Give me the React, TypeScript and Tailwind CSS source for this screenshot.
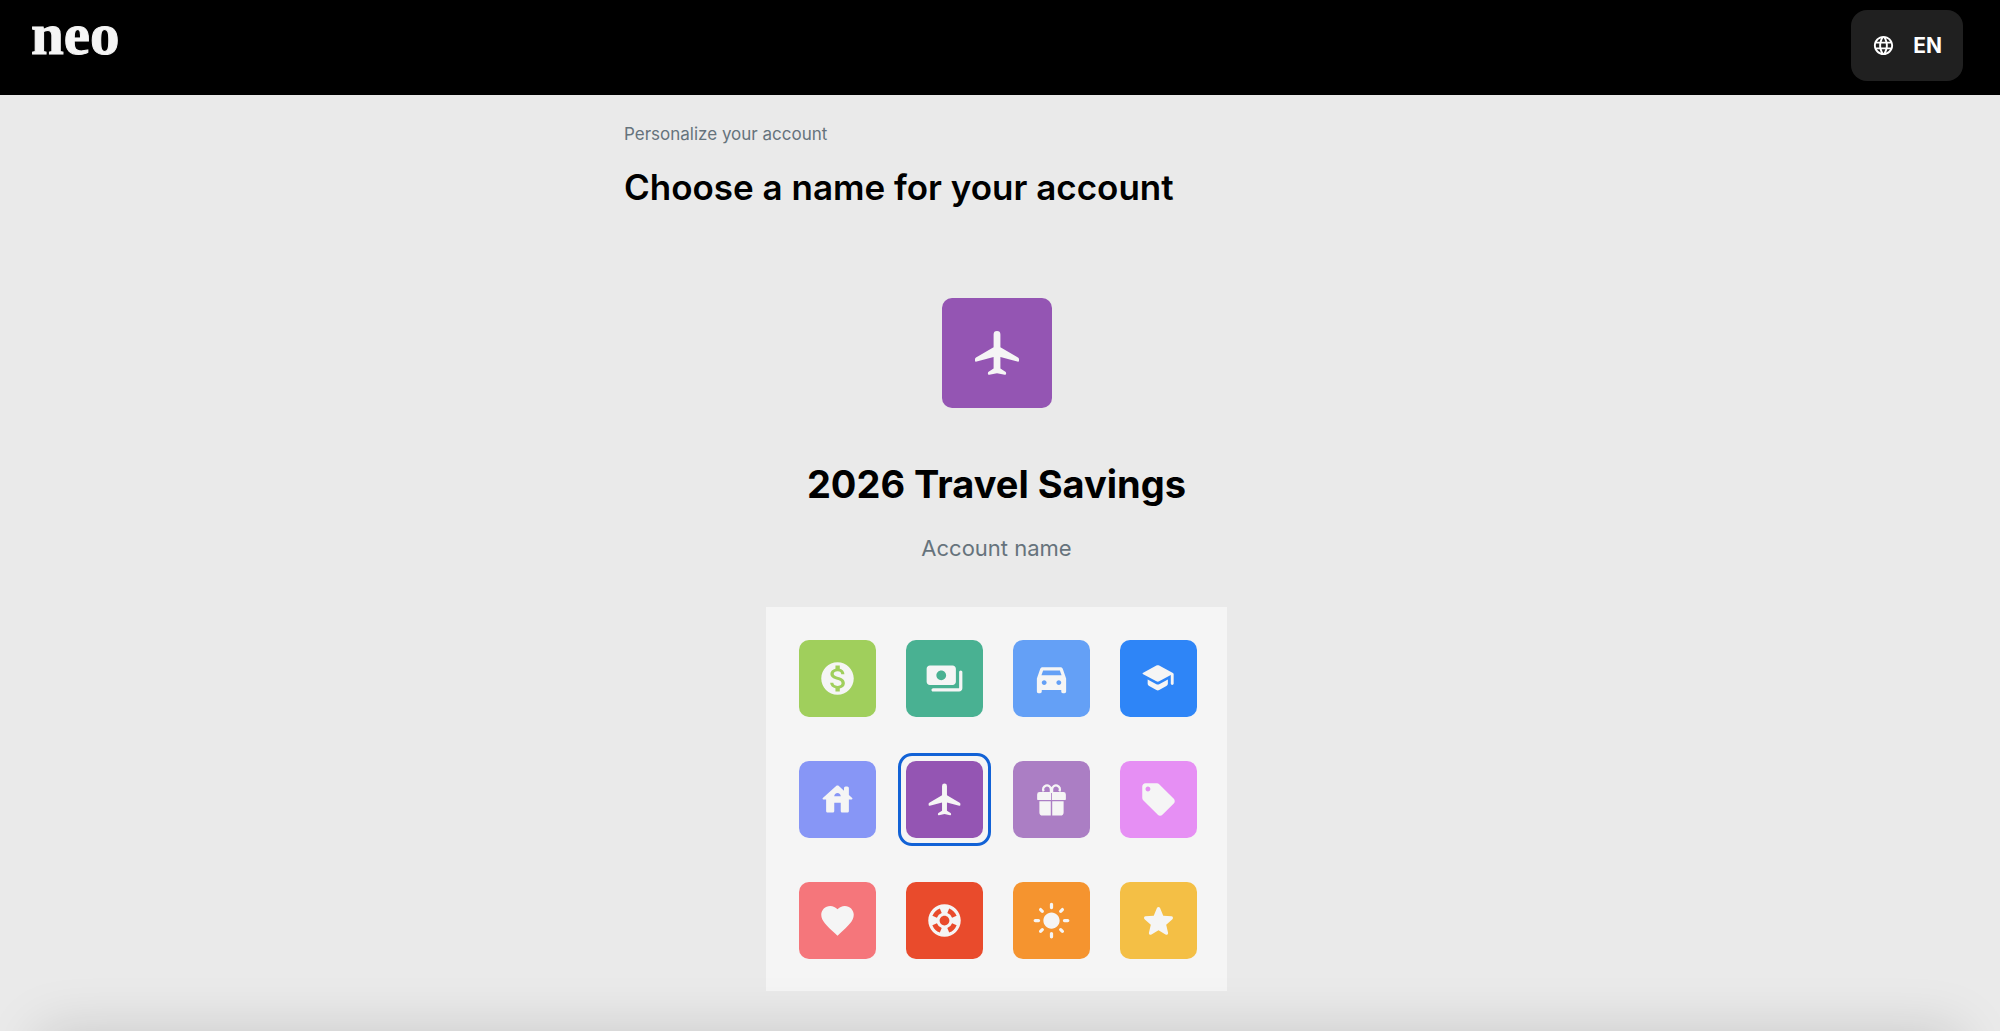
import clsx from "clsx";
import { useState } from "react";
import type { ComponentType } from "react";
import {
  MdDirectionsCarFilled,
  MdFavorite,
  MdLanguage,
  MdLightMode,
  MdLocalOffer,
  MdMonetizationOn,
  MdSupport,
} from "react-icons/md";

type IconProps = { className?: string };

type AccountIcon = {
  id: string;
  label: string;
  color: string;
  Icon: ComponentType<IconProps>;
};

function PaymentsIcon({ className }: IconProps) {
  return (
    <svg viewBox="0 0 24 24" fill="currentColor" className={className}>
      <path d="M19 14V6c0-1.1-.9-2-2-2H3c-1.1 0-2 .9-2 2v8c0 1.1.9 2 2 2h14c1.1 0 2-.9 2-2zm-9-1c-1.66 0-3-1.34-3-3s1.34-3 3-3 3 1.34 3 3-1.34 3-3 3zm13-5v10c0 1.1-.9 2-2 2H5c-.55 0-1-.45-1-1s.45-1 1-1h16V8c0-.55.45-1 1-1s1 .45 1 1z" />
    </svg>
  );
}

function SchoolIcon({ className }: IconProps) {
  return (
    <svg viewBox="-1 -1 27 27" fill="currentColor" className={className}>
      <path d="M5 13.18v2.81c0 .73.4 1.41 1.04 1.76l5 2.73c.6.33 1.32.33 1.92 0l5-2.73c.64-.35 1.04-1.03 1.04-1.76v-2.81l-6.04 3.3c-.6.33-1.32.33-1.92 0L5 13.18zm6.04-9.66L1.9 8.5c-.6.35-.6.65 0 1l9.14 4.98c.6.33 1.32.33 1.92 0L21 10.09V16c0 .55.45 1 1 1s1-.45 1-1V9.59c0-.37-.2-.7-.52-.88l-9.52-5.19c-.6-.32-1.32-.32-1.92 0z" />
    </svg>
  );
}

function HouseIcon({ className }: IconProps) {
  return (
    <svg viewBox="0 0 24 24" fill="currentColor" className={className}>
      <path d="M19 9.3V5c0-.55-.45-1-1-1h-1c-.55 0-1 .45-1 1v1.6l-3.33-3c-.38-.34-.96-.34-1.34 0l-8.36 7.53c-.34.3-.13.87.33.87H5v7c0 .55.45 1 1 1h3c.55 0 1-.45 1-1v-5h4v5c0 .55.45 1 1 1h3c.55 0 1-.45 1-1v-7h1.7c.46 0 .68-.57.33-.87L19 9.3zm-9 .7c0-1.1.9-2 2-2s2 .9 2 2h-4z" />
    </svg>
  );
}

function PlaneIcon({ className }: IconProps) {
  return (
    <svg viewBox="-5 -5 54 54" fill="currentColor" className={className}>
      <path d="M22 0a3.4 3.4 0 0 1 3.4 3.4v12.8L43 26.6a2 2 0 0 1 1 1.8v.8a1.3 1.3 0 0 1-1.7 1.3L25.4 26v11.5l5 3.2q.7.5.7 1.3v.7q0 1.4-1.4 1.1L22 42.2l-7.7 1.6q-1.4.3-1.4-1.1V42q0-.8.7-1.3l5-3.2V26L1.7 30.5A1.3 1.3 0 0 1 0 29.2v-.8a2 2 0 0 1 1-1.8l17.6-10.4V3.4A3.4 3.4 0 0 1 22 0z" />
    </svg>
  );
}

function GiftIcon({ className }: IconProps) {
  return (
    <svg viewBox="-5 -4 38 38" fill="currentColor" className={className}>
      <path
        d="M13.4 8.6V4.9a3.8 3.8 0 1 0-7 2.2M14.6 8.6V4.9a3.8 3.8 0 1 1 7 2.2"
        fill="none"
        stroke="currentColor"
        strokeWidth="2.2"
      />
      <path d="M2.4 7.7h11.2v7.9H1.2Q0 15.6 0 14.4v-4.3q0-2.4 2.4-2.4zM14.4 7.7h11.2q2.4 0 2.4 2.4v4.3q0 1.2-1.2 1.2H14.4z" />
      <path d="M2.2 16.6h11.1v14.1H5.2q-3 0-3-3zM14.7 16.6h11.1v11.1q0 3-3 3h-8.1z" />
    </svg>
  );
}

function StarIcon({ className }: IconProps) {
  return (
    <svg viewBox="0.5 0 23 23" fill="currentColor" className={className}>
      <path d="M12 17.27l4.15 2.51c.76.46 1.69-.22 1.49-1.08l-1.1-4.72 3.67-3.18c.67-.58.31-1.68-.57-1.75l-4.83-.41-1.89-4.46c-.34-.81-1.5-.81-1.84 0L9.19 8.63l-4.83.41c-.88.07-1.24 1.17-.57 1.75l3.67 3.18-1.1 4.72c-.2.86.73 1.54 1.49 1.08l4.15-2.5z" />
    </svg>
  );
}

const ICONS: AccountIcon[] = [
  { id: "money", label: "Money", color: "bg-[#a0cf5c]", Icon: MdMonetizationOn },
  { id: "cash", label: "Cash", color: "bg-[#49b192]", Icon: PaymentsIcon },
  { id: "car", label: "Car", color: "bg-[#64a0f6]", Icon: MdDirectionsCarFilled },
  { id: "school", label: "School", color: "bg-[#2e85f7]", Icon: SchoolIcon },
  { id: "house", label: "House", color: "bg-[#8796f6]", Icon: HouseIcon },
  { id: "travel", label: "Travel", color: "bg-[#9455b3]", Icon: PlaneIcon },
  { id: "gift", label: "Gift", color: "bg-[#ab7ec4]", Icon: GiftIcon },
  { id: "shopping", label: "Shopping", color: "bg-[#e68ff4]", Icon: MdLocalOffer },
  { id: "heart", label: "Heart", color: "bg-[#f5767b]", Icon: MdFavorite },
  { id: "emergency", label: "Emergency", color: "bg-[#e94b2c]", Icon: MdSupport },
  { id: "sun", label: "Sun", color: "bg-[#f5942f]", Icon: MdLightMode },
  { id: "star", label: "Star", color: "bg-[#f4bf45]", Icon: StarIcon },
];

function Header() {
  return (
    <header className="flex h-[95px] items-start justify-between bg-black pt-[10px] pr-[37px] pl-[31px]">
      <a
        href="#"
        className="font-['Liberation_Serif',serif] text-[59px] leading-[48px] font-bold text-[#f5f5f5] [-webkit-text-stroke:1px_#f5f5f5]"
      >
        neo
      </a>
      <button
        type="button"
        className="flex h-[71px] items-center gap-[18px] rounded-2xl bg-[#202020] px-[21px] text-[21px] font-bold text-white"
      >
        <MdLanguage className="size-[23px]" />
        EN
      </button>
    </header>
  );
}

export default function App() {
  const [name, setName] = useState("2026 Travel Savings");
  const [selectedId, setSelectedId] = useState("travel");

  const selected = ICONS.find((i) => i.id === selectedId) ?? ICONS[0];

  return (
    <div className="min-h-screen bg-[#eaeaea] font-['Inter',sans-serif]">
      <Header />

      <main className="pt-[27px] pr-[7px] pb-[39px]">
        <div className="mx-auto max-w-[745px]">
          <p className="text-[17px] leading-6 text-[#66737c]">
            Personalize your account
          </p>
          <h1 className="mt-[17px] text-[35px] leading-[48px] font-semibold text-black">
            Choose a name for your account
          </h1>

          <div className="mt-[87px] flex flex-col items-center">
            <div
              className={clsx(
                "flex size-[110px] items-center justify-center rounded-[10px] text-[#f5f5f5]",
                selected.color
              )}
            >
              <selected.Icon className="size-[54px]" />
            </div>

            <input
              id="account-name"
              value={name}
              onChange={(e) => setName(e.target.value)}
              className="mt-[52px] h-12 w-full bg-transparent text-center text-[38px] leading-[48px] font-bold text-black outline-none"
            />
            <label
              htmlFor="account-name"
              className="mt-[26px] text-[22px] leading-7 text-[#66737c]"
            >
              Account name
            </label>

            {/* Icon picker */}
            <div className="mt-[45px] grid grid-cols-4 gap-x-[30px] gap-y-11 bg-[#f5f5f5] pt-[33px] pr-[30px] pb-8 pl-[33px]">
              {ICONS.map(({ id, label, color, Icon }) => (
                <button
                  key={id}
                  type="button"
                  aria-label={label}
                  aria-pressed={id === selectedId}
                  onClick={() => setSelectedId(id)}
                  className={clsx(
                    "relative flex size-[77px] items-center justify-center rounded-[10px] text-[#f5f5f5]",
                    color,
                    id === selectedId &&
                      "after:absolute after:-inset-2 after:rounded-[14px] after:border-3 after:border-[#1262d6]"
                  )}
                >
                  <Icon className="size-[39px]" />
                </button>
              ))}
            </div>
          </div>
        </div>
      </main>

      {/* Shadow of the action bar below the fold */}
      <div className="pointer-events-none fixed inset-x-10 -bottom-40 h-40 shadow-[0_0_56px_rgba(0,0,0,0.15)]" />
    </div>
  );
}
